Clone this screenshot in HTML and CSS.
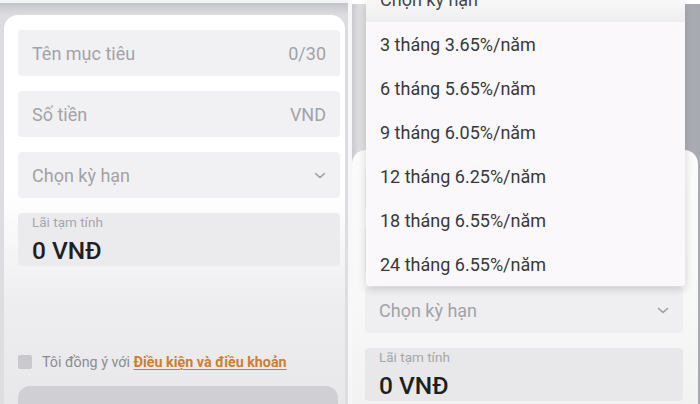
FILE: index.html
```html
<!DOCTYPE html>
<html lang="vi">
<head>
<meta charset="utf-8">
<title>Mục tiêu tiết kiệm</title>
<link rel="stylesheet" href="styles.css">
</head>
<body>
<div class="screens">
  <section class="panel panel-left">
    <div class="card">
      <div class="fields">
        <div class="field"><span class="ph">Tên mục tiêu</span><span class="suffix">0/30</span></div>
        <div class="field"><span class="ph">Số tiền</span><span class="suffix">VND</span></div>
        <div class="field"><span class="ph">Chọn kỳ hạn</span>
          <svg class="chev" width="12" height="7" viewBox="0 0 12 7"><path d="M1.5 1.5 L6 5.5 L10.5 1.5" fill="none" stroke="#9d9da2" stroke-width="1.6" stroke-linecap="round" stroke-linejoin="round"/></svg>
        </div>
        <div class="field field-interest">
          <span class="label">Lãi tạm tính</span>
          <span class="amount">0 VNĐ</span>
        </div>
      </div>
      <div class="agree">
        <span class="checkbox"></span>
        <span class="agree-text">Tôi đồng ý với <a class="terms">Điều kiện và điều khoản</a></span>
      </div>
      <div class="btn"></div>
    </div>
  </section>
  <section class="panel panel-right">
    <div class="card card-right">
      <div class="fields">
        <div class="field"></div>
        <div class="field"></div>
        <div class="field field-dim"><span class="ph">Chọn kỳ hạn</span>
          <svg class="chev" width="12" height="7" viewBox="0 0 12 7"><path d="M1.5 1.5 L6 5.5 L10.5 1.5" fill="none" stroke="#9d9da2" stroke-width="1.6" stroke-linecap="round" stroke-linejoin="round"/></svg>
        </div>
        <div class="field field-interest field-interest-dim">
          <span class="label">Lãi tạm tính</span>
          <span class="amount">0 VNĐ</span>
        </div>
      </div>
    </div>
    <div class="menu">
      <div class="menu-head"><span>Chọn kỳ hạn</span></div>
      <div class="menu-item">3 tháng 3.65%/năm</div>
      <div class="menu-item">6 tháng 5.65%/năm</div>
      <div class="menu-item">9 tháng 6.05%/năm</div>
      <div class="menu-item">12 tháng 6.25%/năm</div>
      <div class="menu-item">18 tháng 6.55%/năm</div>
      <div class="menu-item">24 tháng 6.55%/năm</div>
    </div>
  </section>
</div>
</body>
</html>
```

FILE: styles.css
```css
* { box-sizing: border-box; }
html, body { margin: 0; padding: 0; }
body {
  width: 700px;
  height: 404px;
  overflow: hidden;
  background: #f7f7f8;
  font-family: Roboto, "Noto Sans", "Liberation Sans", sans-serif;
}
.screens {
  display: flex;
  gap: 4px;
  height: 404px;
}
.panel {
  width: 348px;
  height: 404px;
  overflow: hidden;
  position: relative;
}
.panel-left {
  background: linear-gradient(180deg, #f3f3f5 0, #f3f3f5 3px, #c3c4cb 3px, #dcdce0 15px, #dedee1 100%);
  padding: 15px 3px 0 4px;
  display: flex;
  flex-direction: column;
}
.card {
  flex: 1;
  border-radius: 14px 14px 0 0;
  background: linear-gradient(180deg, #ffffff 0, #ffffff 42%, #eeeef0 68%, #e6e6e8 100%);
  padding: 15px 5px 0 14px;
}
.fields {
  display: flex;
  flex-direction: column;
  gap: 15px;
}
.field {
  height: 46px;
  border-radius: 4px;
  background: #f1f1f4;
  padding: 0 14px;
  display: flex;
  align-items: center;
  justify-content: space-between;
  color: #a2a2a7;
  font-size: 18px;
}
.field-interest {
  height: 53px;
  background: #ebebee;
  flex-direction: column;
  align-items: flex-start;
  justify-content: flex-start;
  padding-top: 1px;
}
.label {
  font-size: 13.5px;
  color: #a6a6aa;
  line-height: 17px;
}
.amount {
  font-size: 24.5px;
  font-weight: 500;
  color: #1f1f22;
  line-height: 30px;
  margin-top: 5px;
}
.agree {
  margin-top: 88px;
  display: flex;
  align-items: center;
  gap: 10px;
  height: 16px;
}
.checkbox {
  width: 14px;
  height: 14px;
  border-radius: 2px;
  background: #c9c9cd;
}
.agree-text {
  font-size: 14.3px;
  color: #8c8c90;
  white-space: nowrap;
}
.terms {
  color: #cf7f28;
  font-weight: 700;
  text-decoration: underline;
  text-underline-offset: 2px;
}
.btn {
  margin-top: 16px;
  height: 48px;
  width: 320px;
  border-radius: 12px;
  background: #d0d0d4;
}
.panel-right {
  background:
    linear-gradient(180deg, #ffffff 0, #ffffff 4px, rgba(255,255,255,0) 4px),
    linear-gradient(90deg, #c9c9ce 0, #dedee1 2%, #d9dade 40%, #aeb0b6 95%, #a7a9b0 100%);
  padding-top: 150px;
  display: flex;
  flex-direction: column;
}
.card-right {
  margin-right: 2px;
  border-radius: 14px 14px 0 0;
  background: linear-gradient(180deg, #fbfbfc 0, #f8f8f9 60%, #f2f2f3 100%);
  padding: 15px 15px 0 13px;
}
.field-dim { background: #efeff1; }
.field-interest-dim { background: #e8e8ea; }
.menu {
  position: absolute;
  top: 0;
  left: 14px;
  width: 319px;
  background: #faf8fb;
  box-shadow: 0 3px 8px rgba(0,0,0,0.16);
  border-radius: 0 0 3px 3px;
}
.menu-head {
  height: 22px;
  overflow: hidden;
  padding-left: 14px;
  background: linear-gradient(180deg, #f8f8f9 0, #eeeef0 100%);
  color: #47474b;
  font-size: 18px;
}
.menu-head span {
  display: block;
  line-height: 18px;
  margin-top: -9px;
}
.menu-item {
  height: 44px;
  padding-left: 14px;
  display: flex;
  align-items: center;
  font-size: 18px;
  color: #38383b;
}
```
